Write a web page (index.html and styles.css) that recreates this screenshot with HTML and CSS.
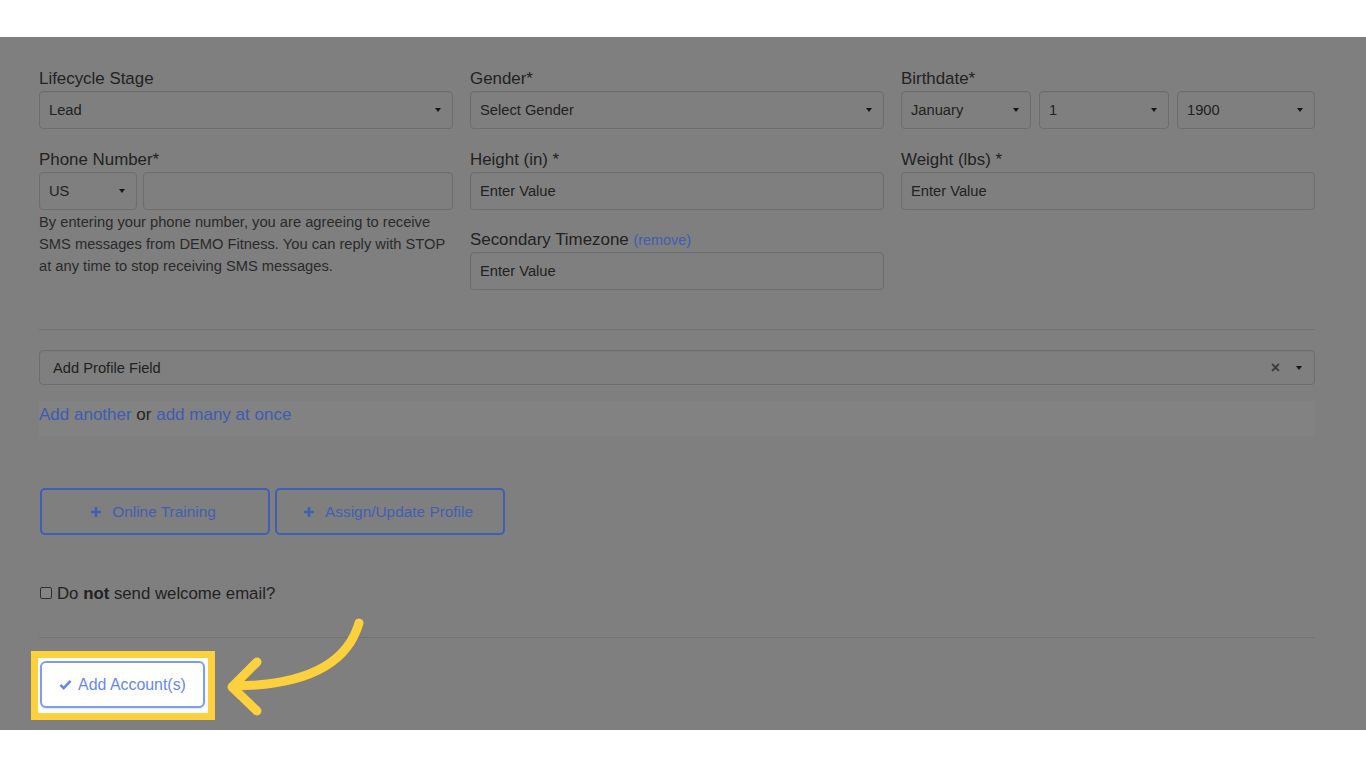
FILE: index.html
```html
<!DOCTYPE html>
<html>
<head>
<meta charset="utf-8">
<link rel="stylesheet" href="styles.css">
</head>
<body>
<div class="topband"></div>
<main class="stage">
  <div class="cols">
    <div class="col">
      <div class="field">
        <label>Lifecycle Stage</label>
        <div class="ctl select"><span>Lead</span><i class="caret"></i></div>
      </div>
      <div class="field">
        <label>Phone Number*</label>
        <div class="phone-row">
          <div class="ctl select country"><span>US</span><i class="caret"></i></div>
          <div class="ctl grow"></div>
        </div>
        <p class="help">By entering your phone number, you are agreeing to receive SMS messages from DEMO Fitness. You can reply with STOP at any time to stop receiving SMS messages.</p>
      </div>
    </div>
    <div class="col">
      <div class="field">
        <label>Gender*</label>
        <div class="ctl select"><span>Select Gender</span><i class="caret"></i></div>
      </div>
      <div class="field">
        <label>Height (in) *</label>
        <div class="ctl"><span>Enter Value</span></div>
      </div>
      <div class="field field-tight">
        <label>Secondary Timezone <a class="remove">(remove)</a></label>
        <div class="ctl"><span>Enter Value</span></div>
      </div>
    </div>
    <div class="col">
      <div class="field">
        <label>Birthdate*</label>
        <div class="date-row">
          <div class="ctl select"><span>January</span><i class="caret"></i></div>
          <div class="ctl select"><span>1</span><i class="caret"></i></div>
          <div class="ctl select"><span>1900</span><i class="caret"></i></div>
        </div>
      </div>
      <div class="field">
        <label>Weight (lbs) *</label>
        <div class="ctl"><span>Enter Value</span></div>
      </div>
    </div>
  </div>

  <div class="rule rule-a"></div>

  <div class="ctl profile">
    <span>Add Profile Field</span>
    <span class="profile-tools"><span class="clear">×</span><i class="caret"></i></span>
  </div>

  <div class="links-band">
    <a class="link">Add another</a> or <a class="link">add many at once</a>
  </div>

  <div class="btn-row">
    <button class="btn-outline"><svg class="plus" viewBox="0 0 12 12" width="12" height="12"><path d="M6 1v10M1 6h10" stroke="currentColor" stroke-width="2.4" fill="none"/></svg>Online Training</button>
    <button class="btn-outline"><svg class="plus" viewBox="0 0 12 12" width="12" height="12"><path d="M6 1v10M1 6h10" stroke="currentColor" stroke-width="2.4" fill="none"/></svg>Assign/Update Profile</button>
  </div>

  <div class="check-row">
    <span class="checkbox"></span>
    <span>Do <b>not</b> send welcome email?</span>
  </div>

  <div class="rule rule-b"></div>

  <div class="highlight">
    <div class="hl-inner">
      <button class="btn-submit"><svg class="check" viewBox="0 0 14 12" width="13" height="11"><path d="M1.5 6.5 L5 10 L12.5 2" stroke="currentColor" stroke-width="2.8" fill="none" stroke-linejoin="miter"/></svg>Add Account(s)</button>
    </div>
  </div>
</main>
<svg class="arrow" width="1366" height="768" viewBox="0 0 1366 768">
  <path d="M359 623 C 346 668, 300 685, 236 686" stroke="#fdd03e" stroke-width="9" fill="none" stroke-linecap="round"/>
  <path d="M257 662 L232 687 L257 711" stroke="#fdd03e" stroke-width="9" fill="none" stroke-linecap="round" stroke-linejoin="round"/>
</svg>
</body>
</html>
```

FILE: styles.css
```css
body {
  margin: 0;
  background: #ffffff;
  font-family: "Liberation Sans", Arial, Helvetica, sans-serif;
  color: #222222;
}
.topband {
  height: 37px;
}
.stage {
  display: block;
  background: #7f7f7f;
  height: 693px;
  box-sizing: border-box;
  padding: 31px 51px 0 39px;
}
.cols {
  display: flex;
  gap: 17px;
}
.col {
  width: 414px;
  display: flex;
  flex-direction: column;
  gap: 20px;
}
.field-tight {
  margin-top: -1px;
}
.field label {
  display: block;
  height: 20px;
  font-size: 16.9px;
  line-height: 21px;
  margin-bottom: 3px;
  color: #222222;
  white-space: nowrap;
}
.remove {
  font-size: 14.4px;
  line-height: 1;
  color: #3e5db3;
}
.ctl {
  height: 38px;
  box-sizing: border-box;
  border: 1px solid #6d6d6d;
  border-radius: 4px;
  display: flex;
  align-items: center;
  padding: 0 9px;
  font-size: 14.7px;
  color: #212121;
  box-shadow: inset 0 1px 1px rgba(0,0,0,0.04);
}
.select {
  justify-content: space-between;
  padding-right: 11px;
}
.caret {
  display: inline-block;
  width: 0;
  height: 0;
  border-left: 3.5px solid transparent;
  border-right: 3.5px solid transparent;
  border-top: 4px solid #161616;
}
.phone-row {
  display: flex;
  gap: 6px;
}
.country {
  width: 98px;
}
.grow {
  flex: 1;
}
.help {
  margin: 1px 0 0;
  font-size: 14.7px;
  line-height: 22px;
  color: #2a2a2a;
}
.date-row {
  display: grid;
  grid-template-columns: 130px 130px 1fr;
  gap: 8px;
}
.rule {
  height: 1px;
  background: #737373;
}
.rule-a {
  margin-top: 39px;
}
.profile {
  margin-top: 20px;
  height: 35px;
  padding: 0 12px 0 13px;
  justify-content: space-between;
}
.profile-tools {
  display: flex;
  align-items: center;
  gap: 16px;
}
.clear {
  font-size: 16px;
  font-weight: bold;
  color: #3a3a3a;
  line-height: 1;
}
.links-band {
  margin-top: 16px;
  padding: 4px 0 11px;
  line-height: 20px;
  font-size: 17px;
  background: #828282;
  color: #222222;
}
.link {
  color: #3d5cb2;
}
.btn-row {
  margin-top: 52px;
  display: flex;
  gap: 5px;
  padding-left: 1px;
}
.btn-outline {
  width: 230px;
  height: 47px;
  box-sizing: border-box;
  background: transparent;
  border: 2px solid #405eb3;
  border-radius: 5px;
  color: #405fb3;
  font-family: "Liberation Sans", Arial, sans-serif;
  font-size: 15.4px;
  display: flex;
  align-items: center;
  justify-content: center;
  gap: 10px;
  padding: 0 4px 0 0;
}
.plus {
  display: block;
}
.check-row {
  margin-top: 49px;
  display: flex;
  align-items: center;
  gap: 5px;
  font-size: 16.8px;
  line-height: 20px;
  color: #222222;
  padding-left: 1px;
}
.checkbox {
  width: 12px;
  height: 12px;
  box-sizing: border-box;
  border: 1px solid #2e2e2e;
  border-radius: 2px;
  background: #848484;
  margin-top: -3px;
}
.rule-b {
  margin-top: 33px;
}
.highlight {
  margin-top: 13px;
  margin-left: -8px;
  width: 184px;
  box-sizing: border-box;
  border: 7px solid #fdd03e;
}
.hl-inner {
  background: #ffffff;
  height: 55px;
  padding: 3px 0 0 2px;
  box-sizing: border-box;
}
.btn-submit {
  width: 165px;
  height: 47px;
  box-sizing: border-box;
  background: #ffffff;
  border: 2px solid #7d9df3;
  border-radius: 6px;
  color: #6688ee;
  font-family: "Liberation Sans", Arial, sans-serif;
  font-size: 15.9px;
  display: flex;
  align-items: center;
  justify-content: center;
  gap: 6px;
  padding: 0;
  box-shadow: 0 1px 2px rgba(0,0,0,0.12);
}
.check {
  display: block;
}
.arrow {
  position: absolute;
  left: 0;
  top: 0;
  pointer-events: none;
}
```
